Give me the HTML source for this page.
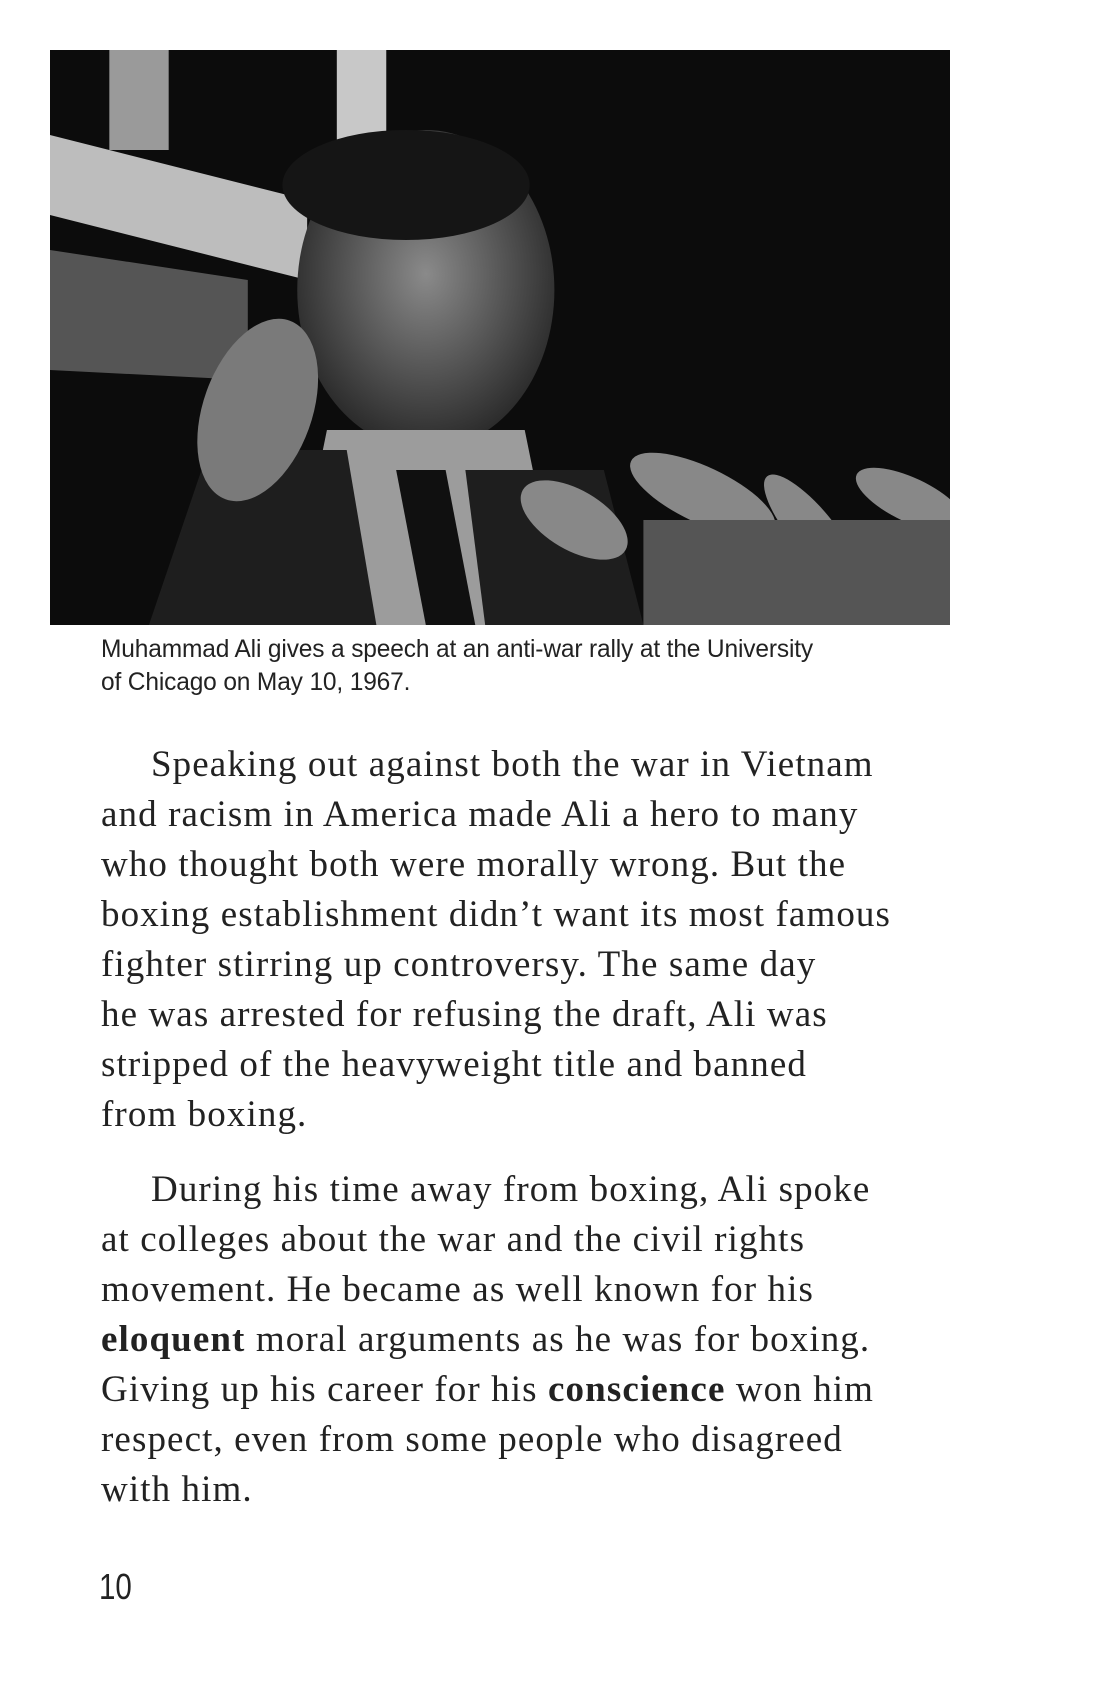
<!DOCTYPE html>
<html><head><meta charset="utf-8"><style>
body{margin:0;width:1100px;height:1700px;background:#fff;position:relative;overflow:hidden}
.photo{position:absolute;left:50px;top:50px;width:900px;height:575px;background:#0d0d0d;overflow:hidden}
.cap{position:absolute;left:101px;top:633px;font-family:"Liberation Sans",sans-serif;font-size:25px;line-height:33px;color:#222;letter-spacing:-0.15px;transform:scaleX(0.98);transform-origin:left}
.body{position:absolute;left:101px;top:740px;width:960px;font-family:"Liberation Serif",serif;font-size:37px;line-height:50px;color:#222;letter-spacing:1.1px;white-space:nowrap}
.body p{margin:0 0 25px 0;text-indent:50px}
.pn{position:absolute;left:99px;top:1566px;font-family:"Liberation Sans",sans-serif;font-size:36px;color:#222;transform:scaleX(0.82);transform-origin:left}
</style></head><body>
<div class="photo">
<svg width="900" height="575" viewBox="0 0 910 575" preserveAspectRatio="none">
<defs>
<radialGradient id="f" cx="0.5" cy="0.45" r="0.55"><stop offset="0" stop-color="#8a8a8a"/><stop offset="1" stop-color="#2a2a2a"/></radialGradient>
</defs>
<rect width="910" height="575" fill="#0c0c0c"/>
<polygon points="0,85 260,150 260,230 0,165" fill="#bdbdbd"/>
<rect x="60" y="0" width="60" height="100" fill="#9a9a9a"/>
<rect x="290" y="0" width="50" height="90" fill="#c8c8c8"/>
<polygon points="0,200 200,230 200,330 0,320" fill="#555"/>
<ellipse cx="380" cy="240" rx="130" ry="160" fill="url(#f)"/>
<ellipse cx="360" cy="135" rx="125" ry="55" fill="#151515"/>
<polygon points="280,380 480,380 520,575 240,575" fill="#9c9c9c"/>
<polygon points="160,400 300,400 330,575 100,575" fill="#1e1e1e"/>
<polygon points="420,420 560,420 600,575 440,575" fill="#1e1e1e"/>
<polygon points="350,420 400,420 430,575 380,575" fill="#101010"/>
<ellipse cx="210" cy="360" rx="55" ry="95" fill="#7a7a7a" transform="rotate(20 210 360)"/>
<g fill="#888">
<ellipse cx="530" cy="470" rx="60" ry="30" transform="rotate(30 530 470)"/>
<ellipse cx="660" cy="445" rx="80" ry="28" transform="rotate(25 660 445)"/>
<ellipse cx="770" cy="480" rx="70" ry="22" transform="rotate(50 770 480)"/>
<ellipse cx="870" cy="450" rx="60" ry="22" transform="rotate(25 870 450)"/>
</g>
<g fill="#555"><rect x="600" y="470" width="310" height="105"/></g>
</svg>
</div>
<div class="cap">Muhammad Ali gives a speech at an anti-war rally at the University<br>of Chicago on May 10, 1967.</div>
<div class="body">
<p>Speaking out against both the war in Vietnam<br>and racism in America made Ali a hero to many<br>who thought both were morally wrong. But the<br>boxing establishment didn’t want its most famous<br>fighter stirring up controversy. The same day<br>he was arrested for refusing the draft, Ali was<br>stripped of the heavyweight title and banned<br>from boxing.</p>
<p>During his time away from boxing, Ali spoke<br>at colleges about the war and the civil rights<br>movement. He became as well known for his<br><b>eloquent</b> moral arguments as he was for boxing.<br>Giving up his career for his <b>conscience</b> won him<br>respect, even from some people who disagreed<br>with him.</p>
</div>
<div class="pn">10</div>
</body></html>
